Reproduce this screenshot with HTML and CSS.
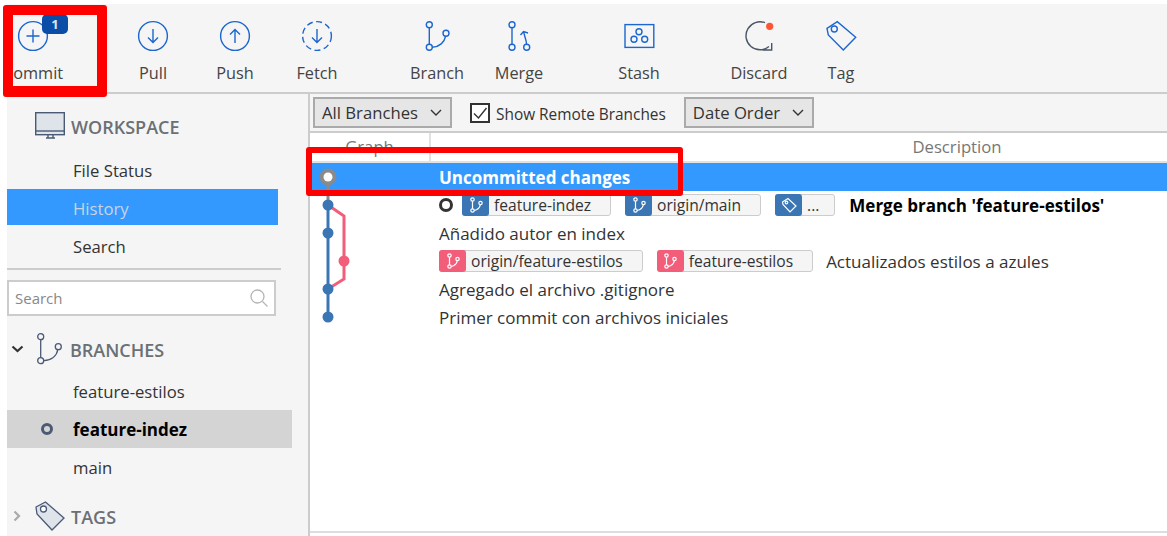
FILE: index.html
```html
<!DOCTYPE html>
<html lang="en">
<head>
    <meta charset="UTF-8" />
    <title>Sourcetree - History</title>
    <link rel="stylesheet" href="styles.css">
</head>
<body>
    <div class="app">
        <header class="toolbar">
            <div class="tool tool-commit">
                <svg class="tool-icon" viewBox="0 0 30 30"><circle cx="15" cy="15" r="14.4"/><path d="M15 8.5v13M8.5 15h13"/></svg>
                <span class="badge">1</span>
                <span>Commit</span>
            </div>
            <div class="tool tool-gap">
                <svg class="tool-icon" viewBox="0 0 30 30"><circle cx="15" cy="15" r="14.4"/><path d="M15 8v13.5M10 16.5l5 5 5-5"/></svg>
                <span>Pull</span>
            </div>
            <div class="tool">
                <svg class="tool-icon" viewBox="0 0 30 30"><circle cx="15" cy="15" r="14.4"/><path d="M15 22V8.5M10 13.5l5-5 5 5"/></svg>
                <span>Push</span>
            </div>
            <div class="tool">
                <svg class="tool-icon" viewBox="0 0 30 30"><circle class="dashed" cx="15" cy="15" r="14.4"/><path d="M15 8v13.5M10 16.5l5 5 5-5"/></svg>
                <span>Fetch</span>
            </div>
            <div class="tool tool-gap">
                <svg class="tool-icon" viewBox="0 0 30 30"><circle cx="7.3" cy="3.7" r="3"/><circle cx="7.3" cy="26.3" r="3"/><circle cx="24" cy="12.3" r="3"/><path d="M7.3 6.7v16.6M23.500 15.300c-1 6-6 10.500-13.200 11"/></svg>
                <span>Branch</span>
            </div>
            <div class="tool">
                <svg class="tool-icon" viewBox="0 0 30 30"><circle cx="8" cy="3.700" r="3"/><circle cx="8" cy="26.300" r="3"/><circle cx="22.700" cy="26.300" r="3"/><path d="M8 6.700v16.600M22.500 23c0-3.500-1.500-6-2.700-11.500M16.500 14l3-3.500 4.500 1.500"/></svg>
                <span>Merge</span>
            </div>
            <div class="tool tool-gap">
                <svg class="tool-icon" viewBox="0 0 30 30"><rect x="1" y="3.600" width="28.800" height="22.800"/><circle cx="15" cy="10.700" r="3"/><circle cx="10" cy="18.300" r="3"/><circle cx="20.700" cy="18.300" r="3"/></svg>
                <span>Stash</span>
            </div>
            <div class="tool tool-gap">
                <svg class="tool-icon icon-discard" viewBox="0 0 30 30"><path d="M21 1.700A14 14 0 1 0 25 25.500M27.700 22v7H19"/><circle class="red-dot" cx="25.700" cy="5.300" r="3.600"/></svg>
                <span>Discard</span>
            </div>
            <div class="tool">
                <svg class="tool-icon" viewBox="0 0 30 30"><path d="M1 7.300 11.300.7l18.400 15.600L17.300 29 2.300 14Z"/><circle cx="8.300" cy="8" r="3"/></svg>
                <span>Tag</span>
            </div>
        </header>

        <div class="content">
            <aside class="sidebar">
                <div class="side-head head-workspace">
                    <svg class="monitor" viewBox="0 0 30 27"><rect x="0.700" y="0.700" width="28.600" height="22" fill="#dfe3ea" stroke="#4a5a75" stroke-width="1.400"/><path d="M1 19h28" stroke="#4a5a75" stroke-width="1.400"/><path d="M11 26h9M13 23v3M18 23v3" stroke="#4a5a75" stroke-width="1.400"/></svg>
                    <span>WORKSPACE</span>
                </div>
                <ul class="nav">
                    <li>File Status</li>
                    <li class="active">History</li>
                    <li>Search</li>
                </ul>
                <hr class="side-line">
                <div class="side-search">
                    <span>Search</span>
                    <svg viewBox="0 0 18 18" width="18" height="18"><circle cx="7.500" cy="7.500" r="6.500"/><path d="M12.500 12.500l5 5"/></svg>
                </div>
                <div class="side-head head-branches">
                    <svg class="chevron" viewBox="0 0 13 8" width="13" height="8"><path d="M1.500 1.500 6.500 6l5-4.500"/></svg>
                    <svg class="head-icon" viewBox="0 0 25 32" width="25" height="32"><circle cx="3.700" cy="3.700" r="3"/><circle cx="3.700" cy="27.700" r="3"/><circle cx="21.300" cy="13.700" r="3"/><path d="M3.700 6.700v18M20.800 16.700c-1 6-6 10.500-14 11"/></svg>
                    <span>BRANCHES</span>
                </div>
                <ul class="branches">
                    <li>feature-estilos</li>
                    <li class="current"><i class="current-dot"></i>feature-indez</li>
                    <li>main</li>
                </ul>
                <div class="side-head head-tags">
                    <svg class="chevron light" viewBox="0 0 8 12" width="8" height="12"><path d="M1.500 1.500 6 6l-4.500 4.500"/></svg>
                    <svg class="head-icon tag-icon" viewBox="0 0 30 30" width="30" height="30"><path d="M1 6 10.500 1 29 17 17 29 2 13Z" fill="#dfe3ea"/><circle cx="8.500" cy="8" r="3" fill="#fff"/></svg>
                    <span>TAGS</span>
                </div>
            </aside>

            <main class="main">
                <div class="filters">
                    <div class="select select-branches"><span>All Branches</span><svg viewBox="0 0 12 7" width="12" height="7"><path d="M1 1l5 5 5-5"/></svg></div>
                    <label class="check">
                        <span class="check-box"><svg viewBox="0 0 16 16" width="16" height="16"><path d="M2 8.500 6.500 13 14.500 3"/></svg></span>
                        <span class="check-text">Show Remote Branches</span>
                    </label>
                    <div class="select select-order"><span>Date Order</span><svg viewBox="0 0 12 7" width="12" height="7"><path d="M1 1l5 5 5-5"/></svg></div>
                </div>
                <div class="columns">
                    <div class="col-graph">Graph</div>
                    <div class="col-desc">Description</div>
                </div>
                <div class="commits">
                    <div class="row row-selected"><b>Uncommitted changes</b></div>
                    <div class="row row-head">
                        <i class="head-ring"></i>
                        <span class="chip"><span class="chip-icon blue"><svg viewBox="0 0 16 16" width="16" height="16"><use href="#branchMini"/></svg></span>feature-indez</span>
                        <span class="chip"><span class="chip-icon blue"><svg viewBox="0 0 16 16" width="16" height="16"><use href="#branchMini"/></svg></span>origin/main</span>
                        <span class="chip chip-tag"><span class="chip-icon blue"><svg viewBox="0 0 16 16" width="16" height="16"><path d="M1.500 5 7 1.500 15 9l-6 6-7-7.500Z"/><circle cx="5.500" cy="5.500" r="1.300"/></svg></span>...</span>
                        <b class="row-msg">Merge branch 'feature-estilos'</b>
                    </div>
                    <div class="row">Añadido autor en index</div>
                    <div class="row">
                        <span class="chip"><span class="chip-icon pink"><svg viewBox="0 0 16 16" width="16" height="16"><use href="#branchMini"/></svg></span>origin/feature-estilos</span>
                        <span class="chip"><span class="chip-icon pink"><svg viewBox="0 0 16 16" width="16" height="16"><use href="#branchMini"/></svg></span>feature-estilos</span>
                        <span class="row-msg-plain">Actualizados estilos a azules</span>
                    </div>
                    <div class="row">Agregado el archivo .gitignore</div>
                    <div class="row">Primer commit con archivos iniciales</div>

                    <svg class="graph" viewBox="0 0 60 170" width="60" height="170">
                        <path d="M18 14v28" stroke="#8a8a8a" stroke-width="3" fill="none"/>
                        <path d="M18 42v112" stroke="#3a75b4" stroke-width="3" fill="none"/>
                        <path d="M18 42 34 53v63l-16 10" stroke="#f25d7a" stroke-width="3" fill="none"/>
                        <circle cx="18" cy="14" r="8.500" fill="#8a8a8a"/>
                        <circle cx="18" cy="14" r="4.500" fill="#fff"/>
                        <circle cx="18" cy="42" r="5.500" fill="#3a75b4"/>
                        <circle cx="18" cy="70" r="5.500" fill="#3a75b4"/>
                        <circle cx="34" cy="98" r="5.500" fill="#f25d7a"/>
                        <circle cx="18" cy="126" r="5.500" fill="#3a75b4"/>
                        <circle cx="18" cy="154" r="5.500" fill="#3a75b4"/>
                    </svg>
                </div>
            </main>
        </div>
    </div>

    <div class="mark mark-commit"></div>
    <div class="mark mark-row"></div>

    <svg class="sprites" width="0" height="0">
        <symbol id="branchMini" viewBox="0 0 16 16">
            <circle cx="4.500" cy="2.500" r="1.700"/>
            <circle cx="4.500" cy="13.500" r="1.700"/>
            <circle cx="12.500" cy="6" r="1.700"/>
            <path d="M4.500 4.200v7.600M12.300 7.700c-.5 3-3 5.300-6.200 5.800"/>
        </symbol>
    </svg>
</body>
</html>
```

FILE: styles.css
```css
body {
    margin: 0;
    background: #fff;
    color: #333;
    font-family: 'Open Sans', 'Noto Sans', sans-serif;
    font-size: 16.7px;
    overflow: hidden;
    height: 536px;
}
ul {
    list-style: none;
    margin: 0;
    padding: 0;
}
.app {
    padding: 4px 0 0 7px;
}
.toolbar {
    display: flex;
    height: 88px;
    background: #f5f5f5;
    border-bottom: 2px solid #ccc;
}
.tool {
    position: relative;
    flex: none;
    width: 82px;
    display: flex;
    flex-direction: column;
    align-items: center;
    padding-top: 17px;
    font-size: 16.3px;
    line-height: 24px;
    color: #444;
}
.tool-commit {
    margin-left: -15px;
}
.tool-gap {
    margin-left: 38px;
}
.tool-icon {
    width: 30px;
    height: 30px;
    margin-bottom: 10px;
    overflow: visible;
    fill: none;
    stroke: #1b66d0;
    stroke-width: 1.4;
}
.tool-icon .dashed {
    stroke-dasharray: 6 3.500;
}
.icon-discard {
    stroke: #4a5568;
}
.icon-discard .red-dot {
    fill: #ff5533;
    stroke: none;
}
.badge {
    position: absolute;
    top: 10px;
    left: 50px;
    width: 26px;
    height: 20px;
    background: #0a4da8;
    border-radius: 5px;
    color: #d8e4f5;
    font-size: 13px;
    font-weight: bold;
    line-height: 20px;
    text-align: center;
}
.content {
    display: flex;
    height: 442px;
}
.sidebar {
    flex: none;
    width: 301px;
    background: #f5f5f5;
    border-right: 2px solid #ccc;
}
.side-head {
    display: flex;
    align-items: center;
    color: #6b7075;
    font-size: 18px;
    font-weight: 600;
}
.side-head span {
    padding-top: 2px;
}
.head-workspace {
    padding: 18px 0 0 28px;
    height: 27px;
}
.monitor {
    width: 30px;
    height: 27px;
    margin-right: 6px;
}
.nav {
    margin-top: 12px;
}
.nav li {
    width: 271px;
    height: 36px;
    margin-bottom: 2px;
    padding-left: 66px;
    box-sizing: border-box;
    line-height: 39px;
}
.nav .active {
    background: #3399ff;
    color: #c9d3df;
}
.side-line {
    width: 274px;
    height: 2px;
    margin: 5px 0 10px;
    border: none;
    background: #ccc;
}
.side-search {
    display: flex;
    align-items: center;
    justify-content: space-between;
    box-sizing: border-box;
    width: 269px;
    height: 36px;
    padding: 0 6px;
    background: #fff;
    border: 2px solid #ccc;
    color: #888;
    font-size: 15px;
}
.side-search svg {
    fill: none;
    stroke: #b5b5b5;
    stroke-width: 1.300;
}
.chevron {
    flex: none;
    fill: none;
    stroke: #333;
    stroke-width: 2.200;
}
.chevron.light {
    stroke: #aaa;
}
.head-icon {
    flex: none;
    fill: none;
    stroke: #4a5a75;
    stroke-width: 1.300;
}
.head-branches {
    height: 32px;
    padding: 17px 0 0 4px;
}
.head-branches .head-icon {
    margin: 0 8px 0 13px;
}
.head-tags {
    height: 30px;
    padding: 15px 0 0 6px;
}
.head-tags .head-icon {
    margin: 0 6px 0 14px;
}
.branches {
    margin-top: 7px;
}
.branches li {
    position: relative;
    box-sizing: border-box;
    width: 285px;
    height: 38px;
    padding-left: 66px;
    line-height: 39px;
}
.branches .current {
    background: #d4d4d4;
    color: #000;
    font-weight: bold;
    font-size: 17px;
}
.current-dot {
    position: absolute;
    left: 34px;
    top: 13px;
    width: 6px;
    height: 6px;
    border: 3px solid #4a5a75;
    border-radius: 50%;
}
.main {
    flex: 1;
    min-width: 0;
    height: 437px;
    overflow: hidden;
    border-bottom: 2px solid #ddd;
}
.filters {
    display: flex;
    align-items: center;
    height: 37px;
    padding-left: 3px;
    background: #f5f5f5;
    border-bottom: 2px solid #ccc;
}
.select {
    display: flex;
    align-items: center;
    justify-content: space-between;
    box-sizing: border-box;
    height: 31px;
    padding: 0 8px 0 7px;
    background: #e6e6e6;
    border: 2px solid #aaa;
}
.select svg {
    fill: none;
    stroke: #333;
    stroke-width: 1.400;
}
.select-branches {
    width: 139px;
}
.select-order {
    width: 130px;
}
.check {
    display: flex;
    align-items: center;
    margin: 0 18px;
    font-size: 15.400px;
}
.check-text {
    padding-top: 3px;
}
.check-box {
    display: flex;
    align-items: center;
    justify-content: center;
    box-sizing: border-box;
    width: 20px;
    height: 20px;
    margin-right: 6px;
    background: #fff;
    border: 2px solid #333;
}
.check-box svg {
    fill: none;
    stroke: #333;
    stroke-width: 1.400;
}
.columns {
    display: flex;
    height: 28px;
    line-height: 27px;
    border-bottom: 2px solid #e2e2e2;
    color: #777;
}
.col-graph {
    flex: none;
    width: 121px;
    box-sizing: border-box;
    text-align: center;
    border-right: 2px solid #e2e2e2;
}
.col-desc {
    flex: none;
    width: 1052px;
    text-align: center;
}
.commits {
    position: relative;
}
.row {
    display: flex;
    align-items: center;
    height: 28px;
    padding-left: 129px;
    font-size: 17px;
}
.row-selected {
    background: #3399ff;
    color: #fff;
}
.head-ring {
    flex: none;
    width: 8px;
    height: 8px;
    margin-right: 9px;
    border: 3px solid #333;
    border-radius: 50%;
}
.chip {
    display: flex;
    align-items: center;
    box-sizing: border-box;
    height: 22px;
    margin-right: 14px;
    padding-right: 19px;
    background: #f5f5f5;
    border: 1px solid #ccc;
    border-radius: 3px;
    font-size: 15.600px;
}
.chip-tag {
    padding-right: 15px;
}
.chip-icon {
    display: flex;
    align-items: center;
    justify-content: center;
    width: 27px;
    height: 22px;
    margin: 0 5px 0 -1px;
    border-radius: 3px;
}
.chip-icon svg {
    fill: none;
    stroke: #fff;
    stroke-width: 1.200;
}
.blue {
    background: #3a75b4;
}
.pink {
    background: #f25d7a;
}
.row-msg {
    color: #000;
}
.row-msg-plain {
    margin-left: -1px;
}
.graph {
    position: absolute;
    left: 0;
    top: 0;
}
.mark {
    position: absolute;
    box-sizing: border-box;
    border-style: solid;
    border-color: #fe0000;
    border-radius: 3px;
}
.mark-commit {
    left: 3px;
    top: 5px;
    width: 104px;
    height: 92px;
    border-width: 10px 10px 11px;
}
.mark-row {
    left: 306px;
    top: 147px;
    width: 377px;
    height: 49px;
    border-width: 6px 5px 6px 6px;
}
.sprites {
    position: absolute;
}
```
